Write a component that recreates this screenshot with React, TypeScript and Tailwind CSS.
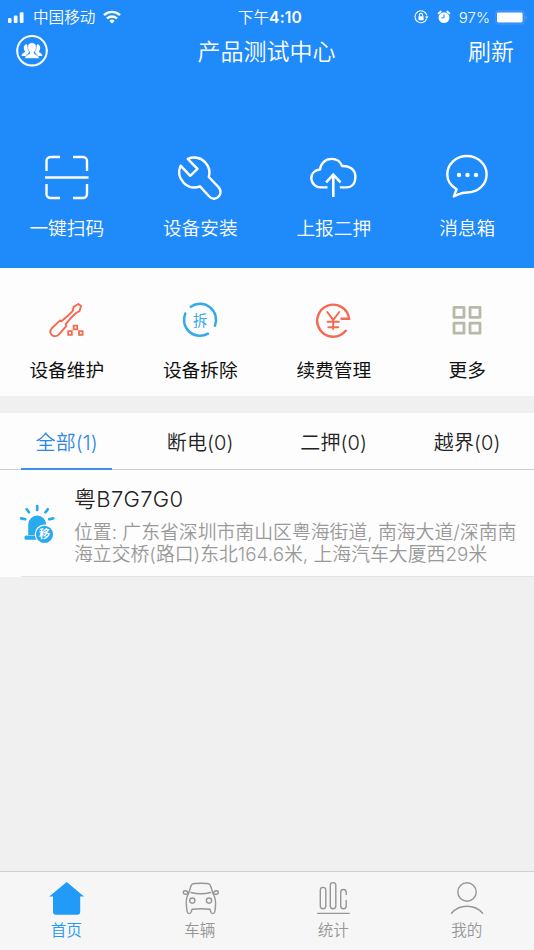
import React from 'react';

const white = { fill: 'none', stroke: '#fff', strokeWidth: 2.4, strokeLinecap: 'butt', strokeLinejoin: 'round' } as const;
const grey = { fill: 'none', stroke: '#969696', strokeWidth: 1.4, strokeLinecap: 'round', strokeLinejoin: 'round' } as const;

function SignalIcon() {
  return (
    <svg className="block" width="16" height="11" viewBox="0 0 16 11" fill="#fff">
      <rect x="0" y="6" width="3.5" height="5" rx="1" />
      <rect x="5.8" y="3.6" width="3.7" height="7.4" rx="1" />
      <rect x="11.8" y="0.2" width="3.7" height="10.8" rx="1" />
    </svg>
  );
}

function WifiIcon() {
  return (
    <svg className="block" width="18" height="14" viewBox="0 0 18 14" fill="none" stroke="#fff" strokeWidth="2.4">
      <path d="M1 5.2a11.4 11.4 0 0 1 16 0" />
      <path d="M4 8.5a7.1 7.1 0 0 1 10 0" />
      <path d="M9 13.5 6.4 10.9a3.7 3.7 0 0 1 5.2 0z" fill="#fff" stroke="none" />
    </svg>
  );
}

function LockIcon() {
  return (
    <svg className="block" width="15" height="14" viewBox="0 0 15 14" fill="none" stroke="#fff" strokeWidth="1.1">
      <path d="M12.6 8.8A6 6 0 1 1 12.8 5.4" />
      <path d="m10.9 6.4 3.6-.2-1.7 2.8z" fill="#fff" stroke="none" />
      <rect x="4.4" y="6.2" width="5.2" height="4" rx=".5" fill="#fff" stroke="none" />
      <path d="M5.4 6.4V5a1.6 1.6 0 0 1 3.2 0v1.4" />
    </svg>
  );
}

function AlarmIcon() {
  return (
    <svg className="block" width="14" height="14" viewBox="0 0 14 14">
      <path d="M1.6 3.4 3.8 1.5M12.4 3.4 10.2 1.5" stroke="#fff" strokeWidth="1.8" strokeLinecap="round" />
      <circle cx="7" cy="7.6" r="5.4" fill="#fff" />
      <path d="M7 4.4v3.4H4.5" fill="none" stroke="#1f8afa" strokeWidth="1" />
    </svg>
  );
}

function BatteryIcon() {
  return (
    <svg className="block" width="34" height="15" viewBox="0 0 34 15">
      <rect x=".8" y=".8" width="28.4" height="13.2" rx="3" fill="none" stroke="#5292fa" strokeWidth="1.2" />
      <rect x="2" y="2.6" width="25.600" height="9.800" rx="1.4" fill="#fff" />
      <path d="M30.5 5.2q1.8.6 1.8 2.3t-1.8 2.3z" fill="#5292fa" />
    </svg>
  );
}

function GroupIcon() {
  return (
    <svg className="block" width="32" height="32" viewBox="0 0 32 32">
      <circle cx="16" cy="15.800" r="14.800" fill="none" stroke="#fff" strokeWidth="2" />
      <path d="M11 9.200c-2 0-3.200 1.500-3.200 3.400 0 1.400.3 2.800 1.300 3.800-.2 1.400-3.400 1.300-3.400 4.600h4.800l3-4.500zM21 9.200c2 0 3.200 1.500 3.200 3.400 0 1.400-.3 2.800-1.300 3.800.2 1.400 3.400 1.300 3.400 4.600h-4.800l-3-4.500z" fill="#fff" />
      <path d="M16 7.700c-2.900 0-4.400 1.900-4.200 4.300-.5 1 .1 2.100.6 2.700.3 1.200.8 1.900 1.400 2.500v1c-.8 1.500-5 1.500-5 5.300h14.400c0-3.800-4.200-3.800-5-5.300v-1c.6-.6 1.100-1.300 1.400-2.500.5-.6 1.100-1.700.6-2.700.2-2.400-1.300-4.300-4.200-4.300z" fill="#fff" stroke="#1f8afa" strokeWidth=".6" />
    </svg>
  );
}

function ScanIcon() {
  return (
    <svg className="block" width="50" height="50" viewBox="42 153 50 50" {...white}>
      <path d="M46.500 171v-10a4 4 0 0 1 4-4h9.500M73 157h10a4 4 0 0 1 4 4v10M46.500 184v10a4 4 0 0 0 4 4h9.500M73 198h10a4 4 0 0 0 4-4v-10M45 177.500h43.500" />
    </svg>
  );
}

function WrenchIcon() {
  return (
    <svg className="block" width="50" height="50" viewBox="175.500 153 50 50" {...white}>
      <path d="M188.200 158.900c5.500-2.400 12.600-1.700 17.300 3.200 4 4.200 5.300 9.900 3.800 14.900l9.700 10.200c3.400 3.600 2.100 8.300-1 10.400-2.700 1.700-5.900 1.300-8.200-1.100l-9.300-10.100c-5.400 2.100-11.700.9-16.300-3.600-4.500-4.800-5.600-11.300-3.100-17.100l9.600 10.100 7.300-6.900z" />
    </svg>
  );
}

function CloudIcon() {
  return (
    <svg className="block" width="50" height="50" viewBox="309 153 50 50" {...white}>
      <path d="M327.500 187.400h-6.500a9.400 9.400 0 0 1-9.700-9.200c0-4.300 3-8 8.700-8.700.8-6.300 5.500-10.600 11.700-10.600 4.900 0 8.700 2.700 10.300 7.200 7.500-.5 13.400 3.400 13.400 10.600 0 7.300-4 10.700-9 10.700h-6.600" />
      <path d="M333.300 197v-22M326.100 182.300l7.200-7.600 7.200 7.600" strokeWidth="2.600" strokeLinejoin="miter" />
    </svg>
  );
}

function ChatIcon() {
  return (
    <svg className="block" width="50" height="50" viewBox="442 153 50 50" {...white}>
      <path d="M456.600 189.200c-5.800-3.300-9.300-8.700-9.300-14.700 0-10.300 8.700-18.500 19.600-18.500s19.700 8.200 19.700 18.500-8.900 18-19.700 18c-3.200 0-5.600.4-8.200 1.700l-4.900 2.300z" />
      <g fill="#fff" stroke="none">
        <circle cx="459" cy="175" r="2.200" />
        <circle cx="467.500" cy="175" r="2.200" />
        <circle cx="476" cy="175" r="2.200" />
      </g>
    </svg>
  );
}

function MaintainIcon() {
  return (
    <svg className="block" width="38" height="38" viewBox="48 301 38 38" fill="none" stroke="#f4694f" strokeWidth="1.900" strokeLinejoin="round">
      <path d="M51.500 334.600c-1.700-1.900-1.300-4.500.3-6.300l8.300-7.900 1.300.8c4.200-3.300 8.500-6.800 11.500-10.500l.7-3.800 4.700-2.900 2.700 2.100-1.500 5.100-3.500 1.800c-3.600 3-7 7.100-10.300 11.200l.7 1.700-7.400 8.400c-2.200 2.200-5.400 2.700-7.500.3z" />
      <path d="M68.200 331.200h3.600v3.600h-3.600zM79 331.200h3.600v3.600H79zM73.600 325.700h3.600v3.600h-3.600z" strokeWidth="1.800" strokeLinejoin="miter" />
    </svg>
  );
}

function RemoveIcon() {
  return (
    <div className="relative flex h-[38px] w-[38px] items-center justify-center">
      <svg className="absolute inset-0" width="38" height="38" viewBox="181 301 38 38" fill="none" stroke="#36a9eb" strokeWidth="2.500" strokeLinecap="round">
        <path d="M190.800 306.700A16 16 0 0 1 214.900 325.700M208 333.700A16 16 0 0 1 185.300 313.500" />
      </svg>
      <span className="pt-[2px] text-[14.500px] leading-none text-[#36a9eb]">拆</span>
    </div>
  );
}

function FeeIcon() {
  return (
    <svg className="block" width="38" height="38" viewBox="315 301 38 38" fill="none" stroke="#f4694f" strokeWidth="2.400" strokeLinecap="round">
      <path d="M345.700 330.700a16 16 0 1 1 3.400-12h-7.600" />
      <path d="m327.300 312 5.900 8 6-8M333.200 320v9M327.600 321.800h11.200M328.400 327.200h9.900" strokeWidth="2" />
    </svg>
  );
}

function MoreIcon() {
  return (
    <svg className="block" width="38" height="38" viewBox="448 301 38 38" fill="none" stroke="#b8baa7" strokeWidth="2.800" strokeLinejoin="round">
      <path d="M454 307.300h10v10h-10zM470 307.300h10v10h-10zM454 323.200h10v10h-10zM470 323.200h10v10h-10z" />
    </svg>
  );
}

function SirenIcon() {
  return (
    <svg className="block" width="36" height="40" viewBox="19 504 36 40">
      <g stroke="#29a9ee" strokeWidth="2.700" strokeLinecap="round">
        <path d="M37.200 506v4M26.700 509.200l2.300 3M47.800 509.200l-2.300 3M21.200 518.400l4 .9M53.200 518.400l-4 .9" />
      </g>
      <path d="M28.200 535v-10.500a9 9 0 0 1 18 0V535z" fill="#29a9ee" />
      <rect x="24.500" y="535.500" width="15" height="4.300" rx="1.600" fill="#29a9ee" />
      <circle cx="44.500" cy="534.300" r="9.200" fill="#29a9ee" stroke="#fdfdfd" strokeWidth="1.200" />
      <text x="44.500" y="538.400" textAnchor="middle" fill="#fff" fontSize="11" fontWeight="700">移</text>
    </svg>
  );
}

function HomeIcon() {
  return (
    <svg className="block" width="36" height="36" viewBox="49 880 36 36" fill="#229af8">
      <path d="M66.700 882 84 896.500h-3.800v15.200a3 3 0 0 1-3 3H56a3 3 0 0 1-3-3v-15.200h-3.800z" />
    </svg>
  );
}

function CarIcon() {
  return (
    <svg className="block" width="38" height="36" viewBox="181 880 38 36" {...grey}>
      <path d="M187.600 895.500c2.200-3.800 2.300-8.800 4.400-11.200 1.200-1.400 16.400-1.400 17.600 0 2.100 2.400 2.200 7.400 4.400 11.200 2.200 3.800 1.800 10.500.8 16.500-.3 2-3.700 2-4 0l-.8-2.800c-6-.6-12-.6-18 0l-.8 2.800c-.3 2-3.700 2-4 0-1-6-1.800-12.700.4-16.500z" />
      <path d="M186.900 894.200h-1.700c-2.500 0-2.500-3.400 0-3.400 1.600 0 2.600 1.300 2.900 2.700M214.800 894.200h1.600c2.500 0 2.500-3.400 0-3.400-1.600 0-2.600 1.300-2.900 2.700M191 892.500q9.800 2.400 19.600 0" />
      <circle cx="192.300" cy="900.600" r="2.600" />
      <circle cx="209" cy="900.600" r="2.600" />
    </svg>
  );
}

function StatsIcon() {
  return (
    <svg className="block" width="36" height="36" viewBox="316 880 36 36" {...grey}>
      <rect x="320.300" y="887.400" width="5.500" height="21.400" rx="2.750" />
      <rect x="330.300" y="882.600" width="5.500" height="26.200" rx="2.750" />
      <path d="M346.200 894.500v-2.200a2.750 2.750 0 0 0-5.500 0V906a2.750 2.750 0 0 0 5.500 0v-5.500M317.700 913.400h31.500" />
    </svg>
  );
}

function MeIcon() {
  return (
    <svg className="block" width="36" height="36" viewBox="449 880 36 36" {...grey}>
      <circle cx="467" cy="892" r="9.200" />
      <path d="M451.500 913.200c7.800-9.300 23.300-9.300 31.100 0" />
    </svg>
  );
}

const primary = [
  { label: '一键扫码', icon: <ScanIcon /> },
  { label: '设备安装', icon: <WrenchIcon /> },
  { label: '上报二押', icon: <CloudIcon /> },
  { label: '消息箱', icon: <ChatIcon /> },
];
const secondary = [
  { label: '设备维护', icon: <MaintainIcon /> },
  { label: '设备拆除', icon: <RemoveIcon /> },
  { label: '续费管理', icon: <FeeIcon /> },
  { label: '更多', icon: <MoreIcon /> },
];
const filters = [
  { label: '全部', count: 1 },
  { label: '断电', count: 0 },
  { label: '二押', count: 0 },
  { label: '越界', count: 0 },
];
const nav = [
  { label: '首页', icon: <HomeIcon /> },
  { label: '车辆', icon: <CarIcon /> },
  { label: '统计', icon: <StatsIcon /> },
  { label: '我的', icon: <MeIcon /> },
];

export default function App() {
  return (
    <div className="flex h-[950px] w-[534px] flex-col overflow-hidden bg-[#f0f0f0] font-['Inter','Noto_Sans_CJK_SC',sans-serif]">
      <header className="h-[268px] shrink-0 bg-[#1f8afa] text-white">
        <div className="grid h-[34px] grid-cols-3 items-center pl-2 pr-[5px]">
          <div className="flex items-center">
            <SignalIcon />
            <span className="ml-[9px] mr-[8px] pt-[2px] text-[15.600px] font-[350] leading-none">中国移动</span>
            <WifiIcon />
          </div>
          <div className="flex items-center justify-center pl-[3px] pt-[2px] text-[15.600px] leading-none">
            <span className="font-[350]">下午</span>
            <span className="font-semibold tracking-[0.200px]">4:10</span>
          </div>
          <div className="flex items-center justify-end">
            <LockIcon />
            <span className="ml-[8px] mr-[8px]"><AlarmIcon /></span>
            <span className="mr-[5px] text-[15px] font-[350] leading-none">97%</span>
            <BatteryIcon />
          </div>
        </div>
        <div className="grid h-[34px] grid-cols-[80px_1fr_80px] items-center pl-4 pr-[20px]">
          <GroupIcon />
          <h1 className="pl-[3px] pt-[2px] text-center text-[23px] font-[350] leading-none">产品测试中心</h1>
          <span className="pt-[2px] text-right text-[23px] font-[350] leading-none">刷新</span>
        </div>
        <div className="mt-[85px] grid grid-cols-4">
          {primary.map((item) => (
            <div key={item.label} className="flex flex-col items-center gap-[13px]">
              {item.icon}
              <span className="text-[18.700px] font-[350] leading-[26px]">{item.label}</span>
            </div>
          ))}
        </div>
      </header>

      <section className="grid h-[128px] shrink-0 grid-cols-4 bg-[#fdfdfd] pt-[33px]">
        {secondary.map((item) => (
          <div key={item.label} className="flex flex-col items-center gap-[19px]">
            {item.icon}
            <span className="text-[18.700px] leading-[26px] text-[#111]">{item.label}</span>
          </div>
        ))}
      </section>

      <nav className="mt-[17px] grid h-[57px] shrink-0 grid-cols-4 border-b border-[#cfcfcf] bg-[#fdfdfd]">
        {filters.map((item, i) => (
          <div key={item.label} className="flex justify-center">
            <div className={i === 0 ? 'flex h-[57px] w-[91px] items-center justify-center border-b-2 border-[#3c90ea] pt-[4px] text-[#2b86e6]' : 'flex h-[57px] items-center pt-[2px] text-[#222]'}>
              <span className="text-[20px] font-[350] leading-none tracking-[0.100px]">{item.label}({item.count})</span>
            </div>
          </div>
        ))}
      </nav>

      <article className="flex h-[106px] shrink-0 bg-[#fdfdfd] pl-[19px]">
        <div className="mt-[34px] w-9 shrink-0"><SirenIcon /></div>
        <div className="ml-[19px] pt-[15px]">
          <h2 className="text-[22px] font-[350] leading-[29px] tracking-[0.300px] text-[#222]">粤B7G7G0</h2>
          <p className="mt-[8px] whitespace-nowrap text-[18.850px] font-[350] leading-[21.500px] text-[#999]">
            位置: 广东省深圳市南山区粤海街道, 南海大道/深南南<br />
            海立交桥(路口)东北164.6米, 上海汽车大厦西29米
          </p>
        </div>
      </article>
      <div className="flex h-px shrink-0 bg-[#e4e4e6]"><div className="w-[21px] bg-[#fdfdfd]" /></div>

      <footer className="mt-auto grid h-[79px] shrink-0 grid-cols-4 border-t border-[#d0d0d0] bg-[#f6f6f6] pt-[8px]">
        {nav.map((item, i) => (
          <div key={item.label} className={i === 0 ? 'flex flex-col items-center text-[#229af8]' : 'flex flex-col items-center text-[#969696]'}>
            {item.icon}
            <span className="mt-[4px] pr-[1px] text-[15.600px] font-[350] leading-[22px]">{item.label}</span>
          </div>
        ))}
      </footer>
    </div>
  );
}
